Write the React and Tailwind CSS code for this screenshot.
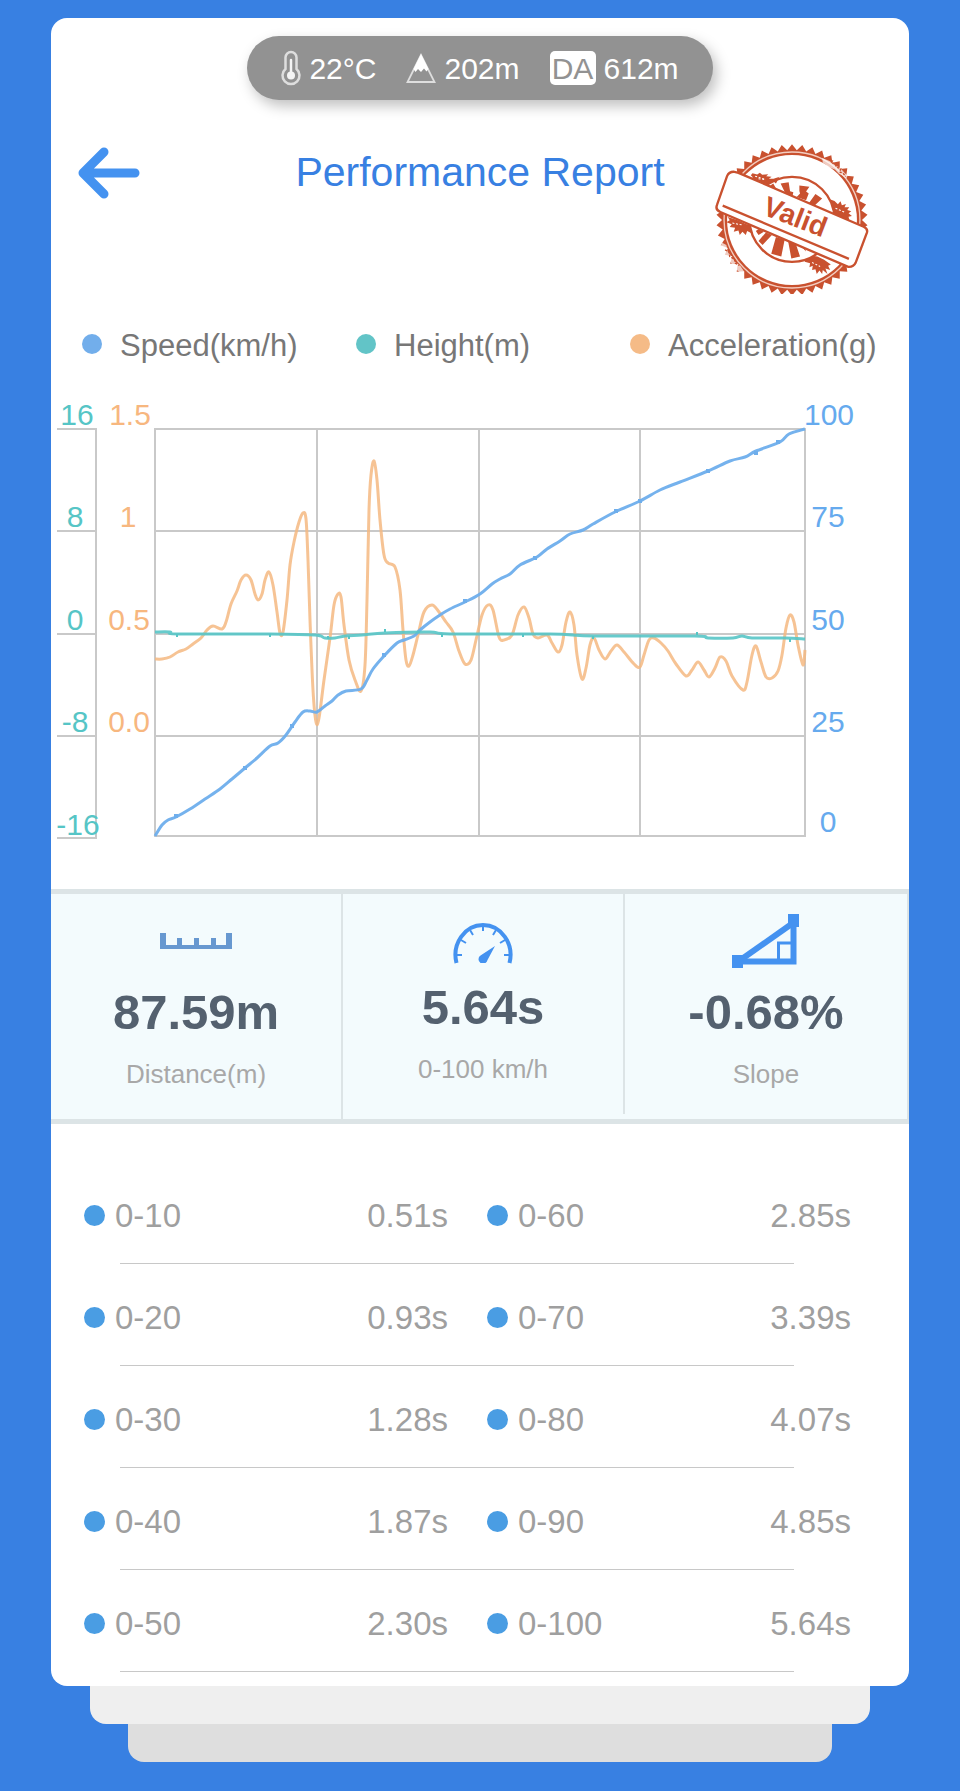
import React from 'react';

const SPEED = [
    [155, 836], [162, 825], [168, 820], [176, 817], [190, 809], [205, 799], [220, 789], [232, 779], [245, 768],
    [257, 758], [270, 746], [278, 743], [286, 735], [295, 722], [303, 712], [310, 711], [317, 712], [325, 706],
    [332, 701], [338, 695], [346, 691], [361, 689], [367, 680], [373, 669], [384, 656], [397, 643], [404, 640],
    [414, 636], [420, 630], [430, 622], [440, 615], [450, 609], [465, 602], [480, 594], [492, 584], [500, 579],
    [510, 574], [520, 565], [537, 557], [547, 549], [560, 541], [570, 534], [583, 530], [593, 524], [615, 512],
    [640, 501], [660, 490], [680, 482], [708, 471], [730, 461], [745, 457], [756, 451], [780, 442], [789, 434],
    [805, 429],
];

const ACCELERATION = [
    [155, 659], [162, 659], [170, 657], [178, 652], [186, 649], [193, 644], [201, 638], [207, 630], [213, 626],
    [222, 629], [226, 622], [231, 604], [237, 591], [241, 580], [246, 575], [251, 580], [255, 594], [258, 600],
    [262, 594], [265, 580], [269, 572], [273, 585], [277, 612], [280, 633], [283, 632], [287, 600], [290, 565],
    [294, 542], [299, 522], [303, 513], [306, 519], [308, 560], [310, 620], [313, 690], [316, 722], [319, 718],
    [324, 680], [330, 638], [334, 605], [338, 594], [341, 597], [344, 625], [349, 660], [355, 680], [361, 691],
    [365, 665], [367, 600], [369, 510], [371, 475], [374, 461], [377, 480], [380, 520], [384, 555], [388, 563],
    [395, 567], [400, 590], [403, 630], [406, 660], [409, 666], [413, 655], [418, 635], [424, 612], [432, 605],
    [439, 612], [446, 622], [453, 632], [459, 651], [465, 664], [471, 660], [476, 640], [482, 615], [488, 605],
    [493, 610], [499, 637], [504, 640], [512, 635], [518, 615], [524, 607], [529, 618], [533, 634], [538, 638],
    [547, 635], [552, 643], [558, 652], [562, 645], [566, 622], [570, 612], [574, 625], [577, 655], [582, 679],
    [586, 668], [590, 645], [594, 638], [599, 650], [605, 659], [611, 651], [617, 645], [624, 652], [634, 664],
    [640, 667], [644, 655], [649, 640], [654, 638], [661, 643], [668, 651], [676, 664], [686, 676], [692, 670],
    [698, 662], [704, 670], [709, 677], [715, 668], [720, 657], [726, 661], [732, 676], [743, 690], [747, 682],
    [752, 655], [756, 646], [761, 662], [766, 677], [772, 678], [778, 671], [782, 655], [786, 628], [790, 615],
    [794, 622], [798, 645], [803, 665], [805, 650],
];

const HEIGHT = [
    [155, 632], [170, 632], [178, 634], [270, 634], [315, 635], [325, 638], [335, 638], [345, 636], [362, 635],
    [385, 633], [430, 632], [450, 634], [550, 634], [595, 636], [695, 636], [708, 638], [733, 638], [742, 636],
    [752, 638], [785, 638], [805, 639],
];

const SPEED_MARKS = [[176, 816], [245, 768], [292, 726], [384, 655], [465, 601], [535, 558], [616, 511], [640, 501], [708, 471], [756, 453], [778, 442]];
const HEIGHT_MARKS = [[177, 636], [270, 636], [328, 638], [349, 638], [385, 631], [442, 636], [523, 636], [593, 638], [697, 634], [790, 641]];

const LEGEND = [
    { label: 'Speed(km/h)', dot: 'bg-[#72aeeb]' },
    { label: 'Height(m)', dot: 'bg-[#62c4c7]' },
    { label: 'Acceleration(g)', dot: 'bg-[#f5bb87]' },
];

const SPLITS = [
    ['0-10', '0.51s', '0-60', '2.85s'],
    ['0-20', '0.93s', '0-70', '3.39s'],
    ['0-30', '1.28s', '0-80', '4.07s'],
    ['0-40', '1.87s', '0-90', '4.85s'],
    ['0-50', '2.30s', '0-100', '5.64s'],
];

// Catmull-Rom spline through the points
const smooth = points => {
    let d = `M${points[0][0]} ${points[0][1]}`;
    for (let i = 0; i < points.length - 1; i++) {
        const p0 = points[i - 1] || points[i];
        const p1 = points[i];
        const p2 = points[i + 1];
        const p3 = points[i + 2] || p2;
        d += ` C${p1[0] + (p2[0] - p0[0]) / 6} ${p1[1] + (p2[1] - p0[1]) / 6}`;
        d += ` ${p2[0] - (p3[0] - p1[0]) / 6} ${p2[1] - (p3[1] - p1[1]) / 6} ${p2[0]} ${p2[1]}`;
    }
    return d;
};

const teeth = (cx, cy, outer, inner, count) =>
    Array.from({ length: count * 2 }, (_, i) => {
        const a = (i * Math.PI) / count;
        const r = i % 2 ? inner : outer;
        return `${(cx + r * Math.sin(a)).toFixed(1)},${(cy - r * Math.cos(a)).toFixed(1)}`;
    }).join(' ');

const ThermometerIcon = () => (
    <svg width="20" height="36" viewBox="0 0 20 36" fill="none" aria-hidden="true">
        <path d="M4.500 19V7.500a5.500 5.500 0 0 1 11 0V19a8.500 8.500 0 1 1-11 0Z" stroke="#dedede" strokeWidth="2.500" />
        <path d="M10 10v15" stroke="#f4f4f4" strokeWidth="2.500" strokeLinecap="round" />
        <circle cx="10" cy="25.500" r="4" fill="#f4f4f4" />
    </svg>
);

const MountainIcon = () => (
    <svg width="30" height="32" viewBox="0 0 30 32" fill="none" aria-hidden="true">
        <path d="M15 3 1.500 30h27Z" stroke="#dedede" strokeWidth="1.800" />
        <path d="M15 2 7.500 17l2 3 2.500-3 3 3 3-3.500 2.500 3 2-2.500Z" fill="#fff" />
    </svg>
);

const Stamp = () => (
    <svg className="w-[154px] h-[150px] mr-[13px]" viewBox="80 56 460 448" aria-label="Valid" role="img">
        <g fill="#c9512f">
            <polygon points={teeth(310, 283, 226, 209, 46)} />
            <circle cx="310" cy="283" r="203" fill="none" stroke="#f3cdc0" strokeWidth="4" />
            <circle cx="310" cy="283" r="194" fill="#fff" />
            {/* worn ink on the ring */}
            <path d="M400 98l22 9 18 13 14 7 12 14 10 10-4 8-12-9-10-5-12-13-16-6-20-15ZM100 350l14 8 4 20 13 16 10 15 14 10 12 18-9 5-20-15-14-22-13-10-14-28Z" fill="#fff" opacity=".7" />
            <path d="M421 100l10 6-4 6 12 3 4 10 13 5-4 9 12 6 6 8M110 372l12 6 2 14 14 8 3 12 12 7" fill="none" stroke="#c9512f" strokeWidth="4" strokeDasharray="7 4" />
            <path d="M192 143l14 4 8-5 7 6 18-2-6 6 16 2-8 6 14 0 18-6-14 14-8 16-22-9-26-12-16-2 6-6-6-6Z" />
            <path d="M425 222l12 4 10 10 8-9 4 12 12-4-4 10 14 0-6 8 12 4-8 6 10 8-10 2 2 10-12-2-14-6-22-10-8-22Z" />
            <path d="M118 274l30 10 22 10 20 6 12 10-14 2 4 12-16-8-4 12-10-10-8 10-4-14-14 4 4-12-16-2 6-8-16-6 10-6Z" />
            <path d="M352 398l18-8 16 2 20 10 20 14-8 4 6 12-14-4 6 16-14-12-2 12-8-10-8 10-4-14-10 2 2-12-10 4 2-12-16-4Z" />
            <path d="M200 152l28 9M210 160l22 3M440 248l28 12M132 292l30 6M370 410l24 12" stroke="#fff" strokeWidth="3" strokeDasharray="6 5" />
            <circle cx="310" cy="281" r="127" fill="#fff" stroke="#c9512f" strokeWidth="7" />
            <path d="M276 174l24-4 6 38-16-5ZM332 180l30 4-10 14 8 6-8 20-28-10 10-10-2-8ZM380 205l20 14-28 26-16-6ZM252 166l18-6-8 14ZM240 184l14-10 8 14ZM302 196l12 4-2 10-12-4Z" />
            <path d="M232 320l18 8-28 30-12-12ZM262 334l26 8-10 50-30-8ZM298 344l22 6 14 42-26 6ZM210 310l16 8-16 10-8-12ZM336 360l12 5 4 12Z" />
        </g>
        <path d="M150 142 524 303Q537 309 534 320L500 411Q494 424 478 423L96 259Q80 252 86 238L116 152Q122 138 138 139Z" fill="#fff" stroke="#c9512f" strokeWidth="7" />
        <path d="M103 240 480 399" stroke="#c9512f" strokeWidth="7" />
        <text x="310" y="300" transform="rotate(21 310 300)" textAnchor="middle" fontSize="84" fontWeight="700" fill="#c9512f">Valid</text>
    </svg>
);

const RulerIcon = () => (
    <svg width="72" height="56" viewBox="0 0 72 56" aria-hidden="true">
        <path d="M0 19h6v12h11v-7h5v7h12v-7h5v7h12v-7h5v7h10V19h6v16H0Z" fill="#6798d0" />
    </svg>
);

const GaugeIcon = () => (
    <svg width="60" height="56" viewBox="0 0 60 56" fill="none" stroke="#4492f0" aria-hidden="true">
        <path d="M3.500 54A27.500 30 0 1 1 56.500 54" strokeWidth="4" />
        <path d="M4 46h5M51 46h5M8 31l5 3M52 31l-5 3M17 21l3 5M43 21l-3 5M30 16v6" strokeWidth="2" />
        <path d="M42 37 34.500 51A5 5 0 0 1 32.500 54h-5a4.500 4.500 0 0 1 0-7.500Z" fill="#4492f0" stroke="none" />
    </svg>
);

const SlopeIcon = () => (
    <svg width="68" height="56" viewBox="0 0 68 56" fill="none" stroke="#4492f0" aria-hidden="true">
        <path d="M7 47 61 9" strokeWidth="6" />
        <path d="M8 47.500H61.500V8" strokeWidth="6" />
        <path d="M46.500 46V29H60" strokeWidth="3" />
        <path d="M0 41h11v13H0ZM56 0h11v13H56Z" fill="#4492f0" stroke="none" />
    </svg>
);

const STATS = [
    { value: '87.59m', label: 'Distance(m)', icon: RulerIcon, cell: 'pt-5' },
    { value: '5.64s', label: '0-100 km/h', icon: GaugeIcon, cell: 'pt-[15px] mb-[5px]' },
    { value: '-0.68%', label: 'Slope', icon: SlopeIcon, cell: 'pt-5' },
];

const Conditions = () => (
    <div className="mx-auto w-fit h-16 px-[34px] rounded-full bg-[#929292] shadow-[4px_6px_14px_rgba(0,0,0,0.25)] flex items-center gap-[30px] text-[30px] leading-none text-white">
        <span className="flex items-center gap-2">
            <ThermometerIcon />
            <span className="pt-[2px]">22°C</span>
        </span>
        <span className="flex items-center gap-2">
            <MountainIcon />
            <span className="pt-[2px]">202m</span>
        </span>
        <span className="flex items-center gap-2">
            <span className="w-[46px] h-[34px] pt-[2px] flex items-center justify-center rounded-[5px] bg-white text-[#929292]">DA</span>
            <span className="pt-[2px]">612m</span>
        </span>
    </div>
);

const Chart = () => (
    <svg className="block w-full" viewBox="51 390 858 499" fill="none" fontSize="30" textAnchor="middle" role="img" aria-label="Speed, height and acceleration">
        <g stroke="#c9c9c9" strokeWidth="2">
            {[429, 531, 634, 736, 836].map(y => <path key={y} d={`M154 ${y}H806`} />)}
            {[155, 317, 479, 640, 805].map(x => <path key={x} d={`M${x} 429V836`} />)}
            {[429, 531, 634, 736, 838].map(y => <path key={y} d={`M57 ${y}H97`} />)}
            <path d="M96 429V838" />
        </g>
        <g strokeWidth="3" strokeLinejoin="round">
            <path d={smooth(ACCELERATION)} stroke="#f5b881" strokeOpacity=".85" />
            <path d={smooth(SPEED)} stroke="#6eaeec" strokeOpacity=".95" />
            <path d={smooth(HEIGHT)} stroke="#56c5c6" strokeOpacity=".9" />
        </g>
        {SPEED_MARKS.map(([x, y]) => <rect key={x} x={x - 2} y={y - 2} width="4" height="4" fill="#6eaeec" />)}
        {HEIGHT_MARKS.map(([x, y]) => <rect key={x} x={x - 1} y={y - 2} width="2" height="3" fill="#56c5c6" />)}
        <g fill="#56c5c6">
            <text x="77" y="425">16</text>
            <text x="75" y="527">8</text>
            <text x="75" y="630">0</text>
            <text x="75" y="732">-8</text>
            <text x="78" y="835">-16</text>
        </g>
        <g fill="#f7b77f">
            <text x="130" y="425">1.5</text>
            <text x="128" y="527">1</text>
            <text x="129" y="630">0.5</text>
            <text x="129" y="732">0.0</text>
        </g>
        <g fill="#66aaee">
            <text x="829" y="425">100</text>
            <text x="828" y="527">75</text>
            <text x="828" y="630">50</text>
            <text x="828" y="732">25</text>
            <text x="828" y="832">0</text>
        </g>
    </svg>
);

const Split = ({ label, line }) => (
    <th scope="row" className={`relative pt-1 font-normal after:absolute after:bottom-0 after:right-0 after:h-px after:bg-[#c8c8c8] ${line}`}>
        <span className="flex items-center gap-[10px]">
            <span className="size-[21px] rounded-full bg-[#4a9de3]" />
            {label}
        </span>
    </th>
);

const SplitTime = ({ time, line }) => (
    <td className={`relative pt-1 pr-[39px] text-right after:absolute after:bottom-0 after:left-0 after:h-px after:bg-[#c8c8c8] ${line}`}>
        {time}
    </td>
);

const App = () => {
    return (
        <main className="min-h-screen bg-[#3880e2] px-[51px] pt-[18px] pb-7 font-['Liberation_Sans',Arial,sans-serif]">
            <section className="rounded-2xl bg-white pt-[18px] pb-[14px]">
                <Conditions />

                <header className="mt-11 px-[27px] grid grid-cols-[1fr_auto_1fr] items-start">
                    <button type="button" aria-label="Back" className="h-[57px] w-fit">
                        <svg width="62" height="52" viewBox="0 0 62 52" fill="none" stroke="#4492f0" strokeWidth="9" strokeLinecap="round" strokeLinejoin="round">
                            <path d="M26 5 5 26l21 21M8 26h49" />
                        </svg>
                    </button>
                    <h1 className="text-[41px] leading-[57px] text-[#3880e2]">Performance Report</h1>
                    <div className="flex justify-end">
                        <Stamp />
                    </div>
                </header>

                <ul className="mt-[30px] mb-[26px] pl-[31px] pr-[5px] grid grid-cols-3 text-[31px] leading-[37px] text-[#777]">
                    {LEGEND.map(item => (
                        <li key={item.label} className="flex items-center gap-[18px] whitespace-nowrap">
                            <span className={`size-5 rounded-full ${item.dot}`} />
                            <span className="pt-[3px]">{item.label}</span>
                        </li>
                    ))}
                </ul>

                <Chart />

                <div className="grid grid-cols-[292fr_282fr_284fr] border-y-[5px] border-[#dce4e6] bg-[#f3fbfd]">
                    {STATS.map(({ value, label, icon: Icon, cell }) => (
                        <div key={label} className={`flex flex-col items-center border-r-2 border-[#dce4e6] pb-[29px] ${cell}`}>
                            <Icon />
                            <strong className="mt-[14px] text-[49px] leading-[56px] text-[#54616f]">{value}</strong>
                            <span className="mt-[18px] text-[26px] leading-8 text-[#a8a8a8]">{label}</span>
                        </div>
                    ))}
                </div>

                <div className="mt-[38px] pl-[33px] pr-[19px]">
                    <table className="w-full table-fixed text-[33px] leading-none text-[#9f9f9f]">
                        <tbody>
                            {SPLITS.map(([from, fromTime, to, toTime]) => (
                                <tr key={from} className="h-[102px]">
                                    <Split label={from} line="after:left-9" />
                                    <SplitTime time={fromTime} line="after:right-0" />
                                    <Split label={to} line="after:left-0" />
                                    <SplitTime time={toTime} line="after:right-24" />
                                </tr>
                            ))}
                        </tbody>
                    </table>
                </div>
            </section>
            <div className="mx-[39px] h-[38px] rounded-b-2xl bg-[#efefef]" />
            <div className="mx-[77px] h-[38px] rounded-b-2xl bg-[#dedede]" />
        </main>
    );
};

export default App;
